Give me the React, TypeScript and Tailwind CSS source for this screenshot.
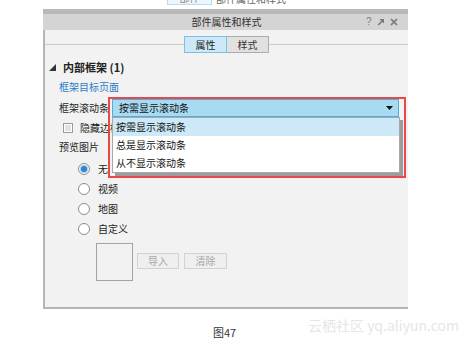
import React from "react";

const cjk = { fontFamily: '"Noto Sans CJK SC", "Noto Sans", sans-serif' };

function Radio({ checked, label }: { checked?: boolean; label: string }) {
  return (
    <div className="flex h-[20px] items-center">
      <div className="ml-[33px] flex h-[12px] w-[12px] items-center justify-center rounded-full border border-[#8c8c8c] bg-white">
        {checked && <div className="h-[6px] w-[6px] rounded-full bg-[#2f86cf] shadow-[0_0_1px_1px_#9cc8ec]" />}
      </div>
      <span className="ml-[8px] text-[10px] leading-[12px] text-[#222]">{label}</span>
    </div>
  );
}

export default function App() {
  return (
    <div className="relative h-[344px] w-[475px] overflow-hidden bg-white" style={cjk}>
      {/* cut-off top strip (bottom edge of a toolbar above) */}
      <div className="h-[9px] overflow-hidden">
        <div className="ml-[167px] mt-[-9px] flex h-[14px] items-end">
          <div className="flex h-[14px] w-[45px] items-center justify-center border border-[#b6dcf2] bg-[#eef6fc] text-[10px] leading-[12px] text-[#888]">
            部件
          </div>
          <span className="ml-[4px] text-[10px] leading-[12px] text-[#666]">部件属性和样式</span>
        </div>
      </div>

      {/* panel */}
      <div className="ml-[43px] flex h-[300px] w-[365px] flex-col">
        <div className="h-[5px] bg-[#b9b9b9]" />
        <div className="flex h-[16px] items-center bg-[#d4d4d4] pl-[2px]">
          <div className="flex-1 text-center text-[10px] leading-[12px] text-[#333]">部件属性和样式</div>
          <div className="absolute left-[366px] top-[16px] flex items-center gap-[5px] text-[#808080]">
            <span className="text-[10px] leading-[12px]" style={{ fontFamily: '"Liberation Sans", sans-serif' }}>?</span>
            <svg width="8" height="8" viewBox="0 0 8 8">
              <path d="M1.2 7 L6 2.2" stroke="#777" strokeWidth="1.6" />
              <path d="M2.5 1 L7 1 L7 5.5 Z" fill="#777" />
            </svg>
            <svg width="8" height="8" viewBox="0 0 8 8">
              <path d="M1 1 L7 7 M7 1 L1 7" stroke="#777" strokeWidth="1.7" />
            </svg>
          </div>
        </div>
        <div className="flex flex-1 flex-col border-b-2 border-l-2 border-[#b5b5b5] bg-[#f2f2f2]">
          {/* tabs */}
          <div className="mt-[6px] flex h-[17px] items-center">
            <div className="h-px flex-1 bg-[#cacaca]" />
            <div className="flex h-[17px] w-[43px] items-center justify-center border border-[#7cc0e8] bg-[#cde8f6] text-[10px] leading-[12px] text-[#222]">
              属性
            </div>
            <div className="flex h-[17px] w-[42px] items-center justify-center border border-l-0 border-[#adadad] bg-[#e1e1e1] text-[10px] leading-[12px] text-[#333]">
              样式
            </div>
            <div className="h-px flex-1 bg-[#cacaca]" />
          </div>

          {/* section header */}
          <div className="mt-[7px] flex h-[14px] items-center">
            <svg width="7" height="7" viewBox="0 0 7 7" className="ml-[4px]">
              <path d="M7 0 L7 7 L0 7 Z" fill="#333" />
            </svg>
            <span className="ml-[7px] text-[11px] font-bold leading-[13px] text-[#222]">内部框架 (1)</span>
          </div>

          {/* link */}
          <div className="mt-[6px] flex h-[14px] items-center pl-[14px]">
            <span className="text-[10px] leading-[12px] text-[#2a7cc7]">框架目标页面</span>
          </div>

          {/* select row */}
          <div className="relative mt-[5px] flex h-[18px] items-center pl-[14px]">
            <span className="w-[53px] text-[10px] leading-[12px] text-[#222]">框架滚动条</span>
            <div className="flex h-[18px] w-[287px] items-center justify-between border border-[#4faee0] bg-[#a8daf2] pl-[6px] pr-[5px]">
              <span className="text-[10px] leading-[12px] text-[#111]">按需显示滚动条</span>
              <svg width="7" height="4" viewBox="0 0 7 4">
                <path d="M0 0 L7 0 L3.5 4 Z" fill="#111" />
              </svg>
            </div>

            {/* red annotation box */}
            <div className="absolute left-[63px] top-[-2px] z-10 h-[81px] w-[298px] border-2 border-[#e84848]" />
            {/* dropdown list */}
            <div className="absolute left-[67px] top-[18px] z-20 flex h-[56px] w-[288px] flex-col border border-[#a8a8a8] bg-white shadow-[3px_3px_0_0_#9d9d9d]">
              <div className="flex h-[18px] items-center bg-[#cde8f7] pl-[3px] text-[10px] leading-[12px] text-[#111]">按需显示滚动条</div>
              <div className="flex h-[19px] items-center pl-[3px] text-[10px] leading-[12px] text-[#111]">总是显示滚动条</div>
              <div className="flex h-[18px] items-center pl-[3px] text-[10px] leading-[12px] text-[#111]">从不显示滚动条</div>
            </div>
          </div>

          {/* checkbox */}
          <div className="mt-[1px] flex h-[19px] items-center">
            <div className="ml-[18px] flex h-[10px] w-[10px] items-center justify-center border border-[#9a9a9a] bg-white">
              <div className="h-[6px] w-[6px] bg-[#e2e2e2]" />
            </div>
            <span className="ml-[7px] text-[10px] leading-[12px] text-[#222]">隐藏边框</span>
          </div>

          {/* preview label */}
          <div className="flex h-[19px] items-center pl-[14px]">
            <span className="text-[10px] leading-[12px] text-[#222]">预览图片</span>
          </div>

          <div className="mt-[3px] flex flex-col">
            <Radio checked label="无" />
            <Radio label="视频" />
            <Radio label="地图" />
            <Radio label="自定义" />
          </div>

          {/* preview + buttons */}
          <div className="mt-[4px] flex items-start">
            <div className="ml-[51px] h-[38px] w-[37px] border border-[#a3a3a3] bg-[#f2f2f2]" />
            <div className="ml-[4px] mt-[10px] flex h-[16px] w-[42px] items-center justify-center border border-[#d2d2d2] bg-[#efefef] text-[10px] leading-[12px] text-[#a6a6a6]">
              导入
            </div>
            <div className="ml-[5px] mt-[10px] flex h-[16px] w-[43px] items-center justify-center border border-[#d2d2d2] bg-[#efefef] text-[10px] leading-[12px] text-[#a6a6a6]">
              清除
            </div>
          </div>
        </div>
      </div>

      {/* caption + watermark */}
      <div className="mt-[8px] flex h-[26px] items-start">
        <span className="ml-[308px] text-[14px] leading-[16px] text-[#e6e6e6]" style={{ fontFamily: '"Noto Sans CJK SC", "Liberation Sans", sans-serif' }}>
          云栖社区 yq.aliyun.com
        </span>
      </div>
      <div className="absolute left-[213px] top-[325px] text-[11px] leading-[14px] text-[#333]" style={{ fontFamily: '"Noto Sans CJK SC", "Liberation Sans", sans-serif' }}>
        图47
      </div>
    </div>
  );
}
